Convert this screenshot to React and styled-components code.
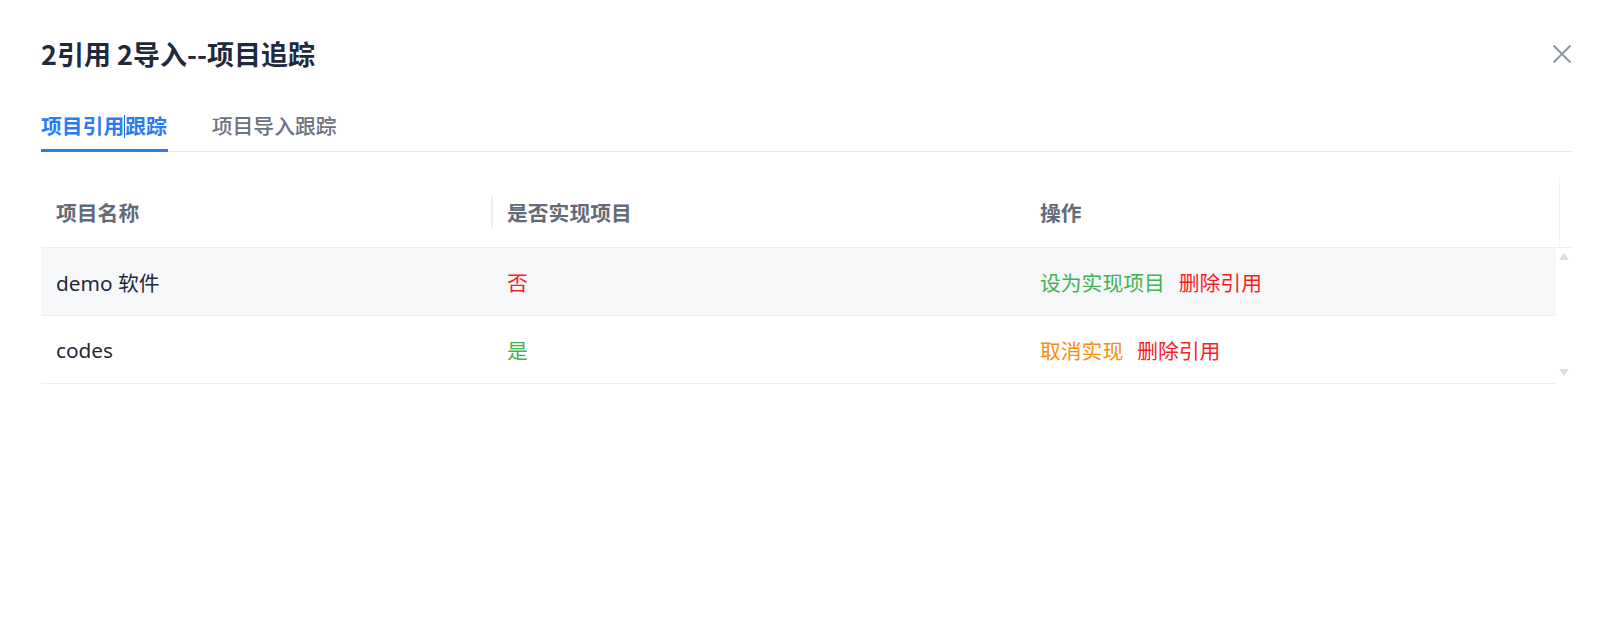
import React, { useState } from 'react';
import styled, { createGlobalStyle } from 'styled-components';

const GlobalStyle = createGlobalStyle`
  html, body {
    margin: 0;
    padding: 0;
    background: #ffffff;
  }
  body {
    font-family: "Noto Sans", "Noto Sans CJK SC", sans-serif;
    -webkit-font-smoothing: antialiased;
  }
`;

const Dialog = styled.div`
  width: 1614px;
  height: 621px;
  box-sizing: border-box;
  padding: 36px 43px 0 41px;
  background: #fff;
`;

const Header = styled.div`
  display: flex;
  align-items: center;
  justify-content: space-between;
  height: 36px;
`;

const Title = styled.h2`
  margin: 0;
  font-family: "Noto Sans CJK SC", sans-serif;
  font-size: 27px;
  line-height: 36px;
  font-weight: 700;
  color: #1f2a3c;
`;

const CloseButton = styled.button`
  width: 20px;
  height: 20px;
  padding: 0;
  margin-right: -1px;
  border: none;
  background: none;
  cursor: pointer;
  display: flex;
  align-items: center;
  justify-content: center;
`;

const TabList = styled.div`
  display: flex;
  gap: 45px;
  margin-top: 38px;
  border-bottom: 1px solid #e5e7eb;
`;

const Tab = styled.div`
  position: relative;
  padding: 1px 0 12px;
  font-family: "Noto Sans CJK SC", sans-serif;
  font-size: 20.8px;
  line-height: 28px;
  font-weight: ${(p) => (p.$active ? 700 : 500)};
  color: ${(p) => (p.$active ? '#2b7bf3' : '#6b7280')};
  cursor: pointer;

  &::after {
    content: '';
    display: ${(p) => (p.$active ? 'block' : 'none')};
    position: absolute;
    left: 0;
    right: -1px;
    bottom: -1px;
    height: 3px;
    background: #2b7bf3;
  }
`;

const Caret = styled.span`
  display: inline-block;
  width: 0;
  height: 23px;
  border-left: 1px solid #2466d6;
  vertical-align: -4px;
`;

const Table = styled.div`
  margin-top: 25px;
`;

const HeadRow = styled.div`
  display: grid;
  grid-template-columns: 451px 533px 1fr 15px;
  height: 71px;
  align-items: center;
  border-bottom: 1px solid #eceef1;
  box-sizing: border-box;
`;

const HeadCell = styled.div`
  position: relative;
  padding: 0 15px;
  font-family: "Noto Sans CJK SC", sans-serif;
  font-size: 20.8px;
  font-weight: 600;
  color: #636b78;

  ${(p) =>
    p.$divider &&
    `
    &::before {
      content: '';
      position: absolute;
      left: -1px;
      top: 50%;
      transform: translateY(-50%);
      width: 2px;
      height: 30px;
      background: #eceef1;
    }
  `}
`;

const Gutter = styled.div`
  align-self: stretch;
  margin-left: 3px;
  border-left: 1px solid #f2f3f5;
`;

const BodyWrap = styled.div`
  display: grid;
  grid-template-columns: 1fr 15px;
`;

const Rows = styled.div``;

const Row = styled.div`
  display: grid;
  grid-template-columns: 451px 533px 1fr;
  height: 68px;
  align-items: center;
  box-sizing: border-box;
  border-bottom: 1px solid #eceef1;
  background: ${(p) => (p.$hover ? '#f6f7f9' : '#ffffff')};
`;

const Cell = styled.div`
  padding: 0 15px;
  font-size: 20.8px;
  color: ${(p) => p.$color || '#1f2937'};
  display: flex;
  gap: 14px;
`;

const ActionLink = styled.a`
  color: ${(p) => p.$color};
  cursor: pointer;
  text-decoration: none;
`;

const Scrollbar = styled.div`
  display: flex;
  flex-direction: column;
  justify-content: space-between;
  align-items: center;
  padding: 5px 0 8px 0;
`;

const Arrow = styled.div`
  width: 0;
  height: 0;
  margin-left: 1px;
  border-left: 5px solid transparent;
  border-right: 5px solid transparent;
  ${(p) =>
    p.$down
      ? 'border-top: 7px solid #dcdde0;'
      : 'border-bottom: 7px solid #dcdde0;'}
`;

const GREEN = '#3fb34f';
const RED = '#fa1c24';
const ORANGE = '#fd8c0c';

const rows = [
  {
    name: 'demo 软件',
    impl: false,
    actions: [
      { label: '设为实现项目', color: GREEN },
      { label: '删除引用', color: RED },
    ],
  },
  {
    name: 'codes',
    impl: true,
    actions: [
      { label: '取消实现', color: ORANGE },
      { label: '删除引用', color: RED },
    ],
  },
];

function CloseIcon() {
  return (
    <svg width="20" height="20" viewBox="0 0 20 20">
      <path d="M1.5 1.5 L18.5 18.5 M18.5 1.5 L1.5 18.5" stroke="#8a94a6" strokeWidth="1.8" fill="none" />
    </svg>
  );
}

export default function App() {
  const [tab, setTab] = useState(0);

  return (
    <>
      <GlobalStyle />
      <Dialog>
        <Header>
          <Title>2引用 2导入--项目追踪</Title>
          <CloseButton aria-label="close">
            <CloseIcon />
          </CloseButton>
        </Header>

        <TabList>
          <Tab $active={tab === 0} onClick={() => setTab(0)}>
            项目引用<Caret />跟踪
          </Tab>
          <Tab $active={tab === 1} onClick={() => setTab(1)}>
            项目导入跟踪
          </Tab>
        </TabList>

        <Table>
          <HeadRow>
            <HeadCell>项目名称</HeadCell>
            <HeadCell $divider>是否实现项目</HeadCell>
            <HeadCell>操作</HeadCell>
            <Gutter />
          </HeadRow>
          <BodyWrap>
            <Rows>
              {rows.map((r, i) => (
                <Row key={r.name} $hover={i === 0}>
                  <Cell>{r.name}</Cell>
                  <Cell $color={r.impl ? GREEN : RED}>{r.impl ? '是' : '否'}</Cell>
                  <Cell>
                    {r.actions.map((a) => (
                      <ActionLink key={a.label} $color={a.color}>
                        {a.label}
                      </ActionLink>
                    ))}
                  </Cell>
                </Row>
              ))}
            </Rows>
            <Scrollbar>
              <Arrow />
              <Arrow $down />
            </Scrollbar>
          </BodyWrap>
        </Table>
      </Dialog>
    </>
  );
}
